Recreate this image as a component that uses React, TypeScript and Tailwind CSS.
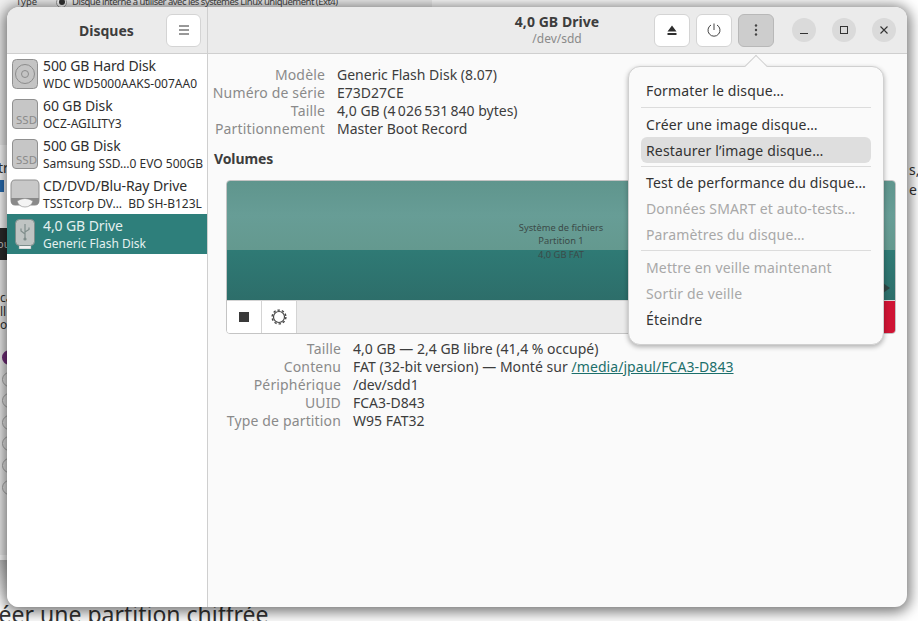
import React from "react";

const FONT = "font-['Noto_Sans',sans-serif]";

function HddIcon() {
  return (
    <svg width="26" height="30" viewBox="0 0 26 30" className="shrink-0">
      <rect x="0.5" y="0.5" width="25" height="29" rx="4" fill="#c4c4c4" stroke="#909090" />
      <circle cx="13" cy="15" r="9.5" fill="none" stroke="#8c8c8c" strokeWidth="1" />
      <circle cx="13" cy="15" r="3.5" fill="none" stroke="#8c8c8c" strokeWidth="1" />
      <path d="M18.5 4 L23 9" stroke="#c4c4c4" strokeWidth="3" />
    </svg>
  );
}

function SsdIcon() {
  return (
    <div className="relative h-[30px] w-[26px] shrink-0 overflow-hidden rounded-[4px] border border-[#909090] bg-[#c6c6c6]">
      <span className="absolute bottom-[1px] left-[3px] text-[11.5px] leading-[14px] text-[#8b8b8b]">SSD</span>
    </div>
  );
}

function CdIcon() {
  return (
    <svg width="30" height="30" viewBox="0 0 30 30" className="shrink-0 -ml-[2px]">
      <path d="M5 1 H25 Q29 1 29 6 V21 Q29 26 25 26 H5 Q1 26 1 21 V6 Q1 1 5 1 Z" fill="#c8c8c8" stroke="#8e8e8e" />
      <path d="M1 19 H29 V22 Q29 26 25 26 H5 Q1 26 1 22 Z" fill="#8a8a8a" />
      <path d="M7 22 Q15 17 23 22 Q21 28 15 28 Q9 28 7 22 Z" fill="#f4f4f4" stroke="#8a8a8a" strokeWidth="0.6" />
    </svg>
  );
}

function UsbIcon() {
  return (
    <svg width="20" height="30" viewBox="0 0 20 30" className="shrink-0 ml-[3px]">
      <rect x="4" y="25" width="12" height="5" fill="#f2f2f2" stroke="#8a9a98" strokeWidth="0.5" />
      <rect x="0.5" y="0.5" width="19" height="26" rx="4" fill="#bfc4c3" stroke="#7d8d8b" />
      <path d="M10 5 V20 M10 15 L6 12 V9.5 M10 13 L14 10.5 V8.5" fill="none" stroke="#7f8d8b" strokeWidth="1.2" />
      <circle cx="10" cy="20" r="1.6" fill="#7f8d8b" />
    </svg>
  );
}

const drives = [
  { icon: <HddIcon />, t: "500 GB Hard Disk", s: "WDC WD5000AAKS-007AA0" },
  { icon: <SsdIcon />, t: "60 GB Disk", s: "OCZ-AGILITY3" },
  { icon: <SsdIcon />, t: "500 GB Disk", s: "Samsung SSD…0 EVO 500GB" },
  { icon: <CdIcon />, t: "CD/DVD/Blu-Ray Drive", s: "TSSTcorp DV…  BD SH-B123L" },
  { icon: <UsbIcon />, t: "4,0 GB Drive", s: "Generic Flash Disk", sel: true },
];

function HeaderButton({ children, active }: { children: React.ReactNode; active?: boolean }) {
  return (
    <div className={`flex h-[33px] w-[36px] items-center justify-center rounded-[6px] border ${active ? "border-[#b8b8b8] bg-[#cdcdcd]" : "border-[#d4d4d4] bg-white"}`}>
      {children}
    </div>
  );
}

function WinBtn({ children }: { children: React.ReactNode }) {
  return <div className="flex h-6 w-6 items-center justify-center rounded-full bg-[#dadada]">{children}</div>;
}

function InfoRows({ rows, labelW }: { rows: [string, React.ReactNode][]; labelW: string }) {
  return (
    <div className={`grid ${labelW} gap-x-3 text-[14px] leading-[18px]`}>
      {rows.map(([l, v]) => (
        <React.Fragment key={l}>
          <div className="flex justify-end whitespace-nowrap tracking-[0.15px] text-[#8a8a8a]">{l}</div>
          <div className="whitespace-nowrap text-[#3d3d3d]">{v}</div>
        </React.Fragment>
      ))}
    </div>
  );
}

function MenuItem({ label, disabled, hover }: { label: string; disabled?: boolean; hover?: boolean }) {
  return (
    <div className={`flex h-[26px] items-center rounded-[6px] px-[5px] text-[14px] tracking-[0.15px] ${hover ? "bg-[#dedede]" : ""} ${disabled ? "text-[#a8a8a8]" : "text-[#333333]"}`}>
      {label}
    </div>
  );
}

export default function App() {
  return (
    <div className={`relative h-[621px] w-[918px] overflow-hidden bg-white ${FONT}`}>
      {/* page behind the window */}
      <div className="absolute left-0 top-0 h-[555px] w-[432px] bg-[#f0f0f0]" />
      <div className="absolute left-0 top-[560px] h-[40px] w-[7px] bg-linear-to-b from-[#bdbdbd] to-white" />
      <div className="absolute left-0 top-[-5px] flex w-[432px] items-center whitespace-nowrap pl-[16px] text-[9.5px] leading-[14px] text-[#444]">
        <span className="w-[21px]">Type</span>
        <span className="ml-[19px] flex h-[11px] w-[11px] items-center justify-center rounded-full border border-[#999] bg-white">
          <span className="h-[6px] w-[6px] rounded-full bg-[#333]" />
        </span>
        <span className="ml-[5px] tracking-[-0.5px]">Disque interne à utiliser avec les systèmes Linux uniquement (Ext4)</span>
      </div>
      <div className="absolute left-0 top-[145px] h-[83px] w-[7px] overflow-hidden bg-white">
        <div className="mt-[15px] -ml-[2px] text-[14px] leading-[16px] text-[#333]">tr</div>
        <div className="mt-[4px] h-[12px] w-[4px] bg-[#2a6fb5]" />
      </div>
      <div className="absolute left-0 top-[228px] h-[32px] w-[7px] overflow-hidden bg-[#2c2c2c] pt-[9px] text-[11px] leading-[14px] text-[#ccc]">
        <div className="-ml-[3px]">ou</div>
      </div>
      <div className="absolute left-0 top-[291px] w-[7px] overflow-hidden text-[12px] leading-[13.5px] text-[#333]">
        <div>ca</div>
        <div>ll</div>
        <div>o</div>
      </div>
      <div className="absolute left-0 top-[350px] flex w-[7px] flex-col gap-[6.6px] overflow-hidden">
        <div className="ml-[2px] h-[15px] w-[15px] shrink-0 rounded-full border-[5px] border-[#77307f] bg-white" />
        {[0, 1, 2, 3, 4, 5].map((i) => (
          <div key={i} className="ml-[2px] h-[15px] w-[15px] shrink-0 rounded-full border border-[#a8a8a8]" />
        ))}
      </div>
      <div className="absolute left-[-25px] top-[599px] whitespace-nowrap text-[23px] leading-[30px] text-[#333]">Créer une partition chiffrée</div>
      <div className="absolute right-0 top-[160px] w-[9px] overflow-hidden whitespace-nowrap text-[14px] leading-[20px] text-[#333]">
        <div>s,</div>
        <div>e p</div>
      </div>

      {/* application window */}
      <div className="absolute left-[7px] top-[7px] flex h-[600px] w-[900px] flex-col overflow-hidden rounded-[12px] bg-[#fafafa] shadow-[0_2px_14px_3px_rgba(0,0,0,0.55)]">
        <div className="flex h-[47px] shrink-0 border-b border-[#cfcfcf] bg-[#ebebeb]">
          <div className="flex w-[201px] shrink-0 items-center border-r border-[#cfcfcf] pl-[72px] pr-[6px]">
            <div className="text-[14px] font-bold text-[#3d3d3d]">Disques</div>
            <div className="ml-auto flex h-[33px] w-[35px] items-center justify-center rounded-[6px] border border-[#d4d4d4] bg-white">
              <svg width="12" height="10" viewBox="0 0 12 10"><path d="M1 1 H11 M1 5 H11 M1 9 H11" stroke="#333" strokeWidth="1" /></svg>
            </div>
          </div>
          <div className="flex min-w-0 flex-1 items-center">
            <div className="flex-1" />
            <div className="ml-[10px] flex flex-col items-center pt-[0px]">
              <div className="text-[14px] font-bold leading-[18px] tracking-[0.05px] text-[#3d3d3d]">4,0 GB Drive</div>
              <div className="text-[12px] leading-[16px] text-[#8a8a8a]">/dev/sdd</div>
            </div>
            <div className="flex flex-1 items-center justify-end gap-[6px] pr-[11px]">
              <HeaderButton>
                <svg width="10" height="10" viewBox="0 0 10 10"><path d="M5 0.5 L9.5 6.5 H0.5 Z M0.5 8 H9.5 V10 H0.5 Z" fill="#2e2e2e" /></svg>
              </HeaderButton>
              <HeaderButton>
                <svg width="14" height="14" viewBox="0 0 14 14"><path d="M4 2 A6 6 0 1 0 10 2 M7 0.5 V7" fill="none" stroke="#444" strokeWidth="1" /></svg>
              </HeaderButton>
              <HeaderButton active>
                <svg width="4" height="12" viewBox="0 0 4 12"><circle cx="2" cy="1.5" r="1.2" fill="#444" /><circle cx="2" cy="6" r="1.2" fill="#444" /><circle cx="2" cy="10.5" r="1.2" fill="#444" /></svg>
              </HeaderButton>
              <div className="ml-[12px] flex items-center gap-[16px]">
                <WinBtn><svg width="10" height="10" viewBox="0 0 10 10"><path d="M1 8.5 H9" stroke="#333" strokeWidth="1" /></svg></WinBtn>
                <WinBtn><svg width="10" height="10" viewBox="0 0 10 10"><rect x="1.5" y="1.5" width="7" height="7" fill="none" stroke="#333" strokeWidth="1" /></svg></WinBtn>
                <WinBtn><svg width="10" height="10" viewBox="0 0 10 10"><path d="M1.5 1.5 L8.5 8.5 M8.5 1.5 L1.5 8.5" stroke="#333" strokeWidth="1.1" /></svg></WinBtn>
              </div>
            </div>
          </div>
        </div>

        <div className="flex min-h-0 flex-1">
          <div className="w-[201px] shrink-0 border-r border-[#cfcfcf] bg-white">
            {drives.map((d) => (
              <div key={d.t} className={`flex h-10 items-center gap-[5px] overflow-hidden pl-[5px] ${d.sel ? "bg-[#2e7f7b] text-[#e4f0ef]" : "text-[#2e2e2e]"}`}>
                <div className="flex w-[26px] shrink-0">{d.icon}</div>
                <div className="-mt-[2px] min-w-0 whitespace-pre">
                  <div className="text-[14px] leading-[20px] tracking-[-0.1px]">{d.t}</div>
                  <div className="text-[12px] leading-[15px]">{d.s}</div>
                </div>
              </div>
            ))}
          </div>

          <div className="min-w-0 flex-1 pr-[11px] pt-[12px]">
            <div className="pl-[6px]">
              <InfoRows
                labelW="grid-cols-[111px_1fr]"
                rows={[
                  ["Modèle", "Generic Flash Disk (8.07)"],
                  ["Numéro de série", "E73D27CE"],
                  ["Taille", "4,0 GB (4\u202f026\u202f531\u202f840 bytes)"],
                  ["Partitionnement", "Master Boot Record"],
                ]}
              />
              <div className="mt-[12px] text-[14px] font-bold leading-[18px] tracking-[-0.1px] text-[#3d3d3d]">Volumes</div>
            </div>
            <div className="ml-[18px] mt-[12px] overflow-hidden rounded-[4px] border border-[#c4c4c4]">
              <div className="relative h-[119px]">
                <div className="h-[69px] bg-linear-to-b from-[#5f958d] via-[#679d96] to-[#64998f]" />
                <div className="h-[50px] bg-linear-to-b from-[#2f7a75] to-[#2d6e6a]" />
                <div className="absolute left-[259px] top-[40px] w-[150px] text-center text-[9.3px] leading-[13.3px] text-[#3b4a48]">
                  <div>Système de fichiers</div>
                  <div>Partition 1</div>
                  <div>4,0 GB FAT</div>
                </div>
                <svg width="8" height="10" viewBox="0 0 8 10" className="absolute right-[4px] top-[102px]"><path d="M0 0 L7 5 L0 10 Z" fill="#333" opacity="0.7" /></svg>
              </div>
              <div className="flex h-[33px] border-t border-[#d4d4d4] bg-[#ebebeb]">
                <div className="flex w-[35px] items-center justify-center border-r border-[#d4d4d4] bg-white">
                  <div className="h-[10px] w-[10px] bg-[#3a3a3a]" />
                </div>
                <div className="flex w-[35px] items-center justify-center border-r border-[#d4d4d4] bg-white">
                  <svg width="16" height="16" viewBox="0 0 16 16">
                    <circle cx="8" cy="8" r="5.5" fill="none" stroke="#444" strokeWidth="1.2" />
                    <circle cx="8" cy="8" r="6.9" fill="none" stroke="#444" strokeWidth="1.4" strokeDasharray="2.4 2" />
                  </svg>
                </div>
                <div className="ml-auto w-[12px] bg-[#cf1434]" />
              </div>
            </div>
            <div className="ml-[18px] mt-[6px]">
              <InfoRows
                labelW="grid-cols-[115px_1fr]"
                rows={[
                  ["Taille", "4,0 GB — 2,4 GB libre (41,4 % occupé)"],
                  ["Contenu", <span key="c" className="tracking-[0.05px]">FAT (32-bit version) — Monté sur <span className="text-[#1c6f6b] underline">/media/jpaul/FCA3-D843</span></span>],
                  ["Périphérique", "/dev/sdd1"],
                  ["UUID", "FCA3-D843"],
                  ["Type de partition", "W95 FAT32"],
                ]}
              />
            </div>
          </div>
        </div>
      </div>

      {/* popover menu */}
      <div className="absolute left-[628px] top-[66px] w-[256px] rounded-[12px] border border-[#d0d0d0] bg-[#fafafa] px-[12px] pb-[12px] pt-[10px] shadow-[0_2px_5px_rgba(0,0,0,0.3)]">
        <div className="absolute left-[119px] top-[-9px] h-[16px] w-[16px] rotate-45 border-l border-t border-[#d0d0d0] bg-[#fafafa]" />
        <div className="relative">
          <MenuItem label="Formater le disque…" />
          <div className="mb-[3px] mt-[4px] h-px bg-[#dcdcdc]" />
          <MenuItem label="Créer une image disque…" />
          <MenuItem label="Restaurer l’image disque…" hover />
          <div className="mb-[2px] mt-[3px] h-px bg-[#dcdcdc]" />
          <MenuItem label="Test de performance du disque…" />
          <MenuItem label="Données SMART et auto-tests…" disabled />
          <MenuItem label="Paramètres du disque…" disabled />
          <div className="my-[3px] h-px bg-[#dcdcdc]" />
          <MenuItem label="Mettre en veille maintenant" disabled />
          <MenuItem label="Sortir de veille" disabled />
          <MenuItem label="Éteindre" />
        </div>
      </div>
    </div>
  );
}
